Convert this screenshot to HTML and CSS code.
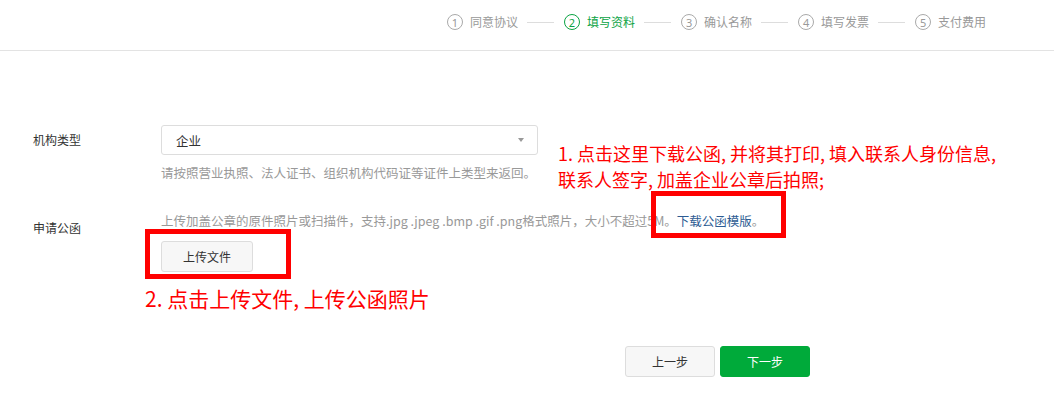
FILE: index.html
```html
<!DOCTYPE html>
<html>

<head>
    <meta charset="utf-8">
    <link rel="stylesheet" href="styles.css">
</head>

<body>
    <div class="header">
        <ul class="steps">
            <li class="step"><span class="num">1</span>同意协议</li>
            <li class="sep"></li>
            <li class="step active"><span class="num">2</span>填写资料</li>
            <li class="sep"></li>
            <li class="step"><span class="num">3</span>确认名称</li>
            <li class="sep"></li>
            <li class="step"><span class="num">4</span>填写发票</li>
            <li class="sep"></li>
            <li class="step"><span class="num">5</span>支付费用</li>
        </ul>
    </div>

    <div class="form">
        <div class="row row-type">
            <div class="label">机构类型</div>
            <div class="field">
                <div class="select">
                    <span>企业</span>
                    <i class="arrow"></i>
                </div>
                <p class="tip">请按照营业执照、法人证书、组织机构代码证等证件上类型来返回。</p>
            </div>
            <div class="note note-1">1. 点击这里下载公函, 并将其打印, 填入联系人身份信息,<br>联系人签字, 加盖企业公章后拍照;</div>
        </div>

        <div class="row row-letter">
            <div class="label">申请公函</div>
            <div class="field">
                <p class="tip">上传加盖公章的原件照片或扫描件，支持.jpg .jpeg .bmp .gif .png格式照片，大小不超过5<span class="mark-wrap">M。<a class="link" href="#">下载公函模版</a>。<span class="mark mark-link"></span></span></p>
                <div class="upload-wrap">
                    <button class="btn">上传文件</button>
                    <span class="mark mark-upload"></span>
                </div>
                <div class="note note-2">2. 点击上传文件, 上传公函照片</div>
            </div>
        </div>

        <div class="actions">
            <button class="btn btn-prev">上一步</button>
            <button class="btn btn-next">下一步</button>
        </div>
    </div>
</body>

</html>
```

FILE: styles.css
```css
body {
    margin: 0;
    background: #fff;
    font-family: "Noto Sans CJK SC", "Noto Sans", sans-serif;
    font-size: 12px;
    color: #333;
}

.header {
    height: 50px;
    border-bottom: 1px solid #e3e3e3;
}

.steps {
    list-style: none;
    margin: 0;
    padding: 13px 0 0 447px;
    display: flex;
    align-items: center;
}

.step {
    display: flex;
    align-items: center;
    color: #999;
    font-size: 12px;
    line-height: 18px;
}

.step .num {
    width: 14px;
    height: 14px;
    border: 1px solid #aaa;
    border-radius: 50%;
    display: flex;
    align-items: center;
    justify-content: center;
    font-family: "Noto Sans", sans-serif;
    font-size: 11px;
    line-height: 1;
    margin-right: 7px;
}

.step.active {
    color: #0aa343;
}

.step.active .num {
    border-color: #0aa343;
}

.sep {
    width: 27px;
    height: 1px;
    background: #ddd;
    margin: 1px 10px 0 9px;
}

.form {
    padding: 74px 0 0 33px;
}

.row {
    display: flex;
    position: relative;
}

.label {
    width: 128px;
    flex-shrink: 0;
    font-size: 12px;
    color: #333;
}

.row-type .label {
    line-height: 30px;
}

.field {
    position: relative;
}

.select {
    box-sizing: border-box;
    width: 377px;
    height: 30px;
    border: 1px solid #ddd;
    border-radius: 3px;
    padding: 0 13px 0 14px;
    display: flex;
    align-items: center;
    justify-content: space-between;
    font-size: 12.5px;
    color: #333;
}

.arrow {
    width: 0;
    height: 0;
    border-left: 3px solid transparent;
    border-right: 3px solid transparent;
    border-top: 4px solid #999;
}

.tip {
    margin: 0;
    color: #999;
    font-size: 12.5px;
    line-height: 18px;
    white-space: nowrap;
}

.row-type .tip {
    margin-top: 9px;
}

.note {
    color: #f00;
    font-weight: 400;
    white-space: nowrap;
}

.note-1 {
    font-size: 18px;
    line-height: 26px;
    margin: 15px 0 0 20px;
}

.row-letter {
    margin-top: 18px;
}

.row-letter .label {
    padding-top: 9px;
}

.row-letter .tip {
    margin-top: 2px;
}

.link {
    color: #2d5c93;
    text-decoration: none;
}

.mark-wrap {
    position: relative;
}

.mark {
    position: absolute;
    border: 5px solid #f00;
    pointer-events: none;
}

.mark-link {
    left: -3px;
    top: -20px;
    width: 125px;
    height: 37px;
}

.upload-wrap {
    position: relative;
    margin-top: 11px;
    width: 92px;
}

.btn {
    font-family: inherit;
    font-size: 12px;
    height: 31px;
    border: 1px solid #ddd;
    border-radius: 3px;
    background: #f7f7f7;
    color: #333;
    padding: 0;
    cursor: pointer;
}

.upload-wrap .btn {
    width: 92px;
    display: block;
}

.mark-upload {
    left: -16px;
    top: -12px;
    width: 136px;
    height: 40px;
}

.note-2 {
    font-size: 21px;
    line-height: 28px;
    margin: 12px 0 0 -16px;
}

.actions {
    display: flex;
    gap: 5px;
    padding: 34px 0 0 592px;
}

.btn-prev {
    width: 90px;
}

.btn-next {
    width: 90px;
    background: #00aa3a;
    border-color: #00aa3a;
    color: #fff;
}
```
